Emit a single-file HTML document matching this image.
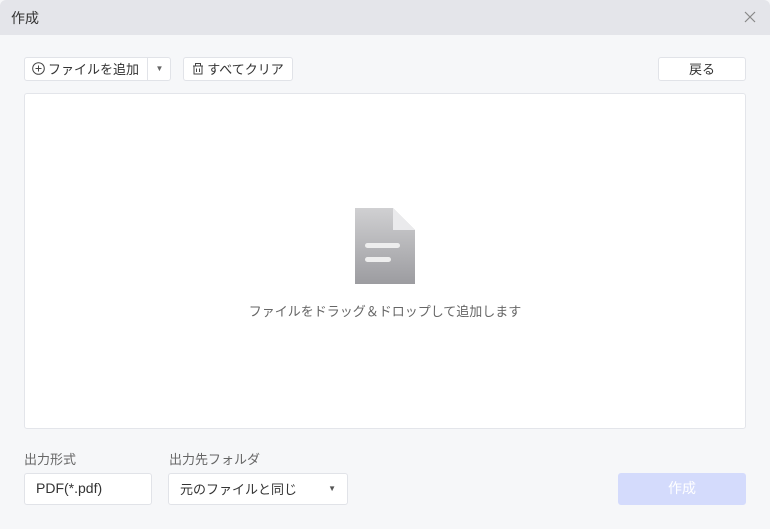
<!DOCTYPE html>
<html><head><meta charset="utf-8"><style>
*{box-sizing:border-box;margin:0;padding:0}
body{width:770px;height:529px;background:#f6f7f9;font-family:"Liberation Sans","Noto Sans CJK JP",sans-serif;position:relative;overflow:hidden;color:#333}
.hdr{position:absolute;left:0;top:0;width:770px;height:35px;background:#e4e5ea;border-radius:6px 6px 0 0}
.hdr .t{position:absolute;left:11px;top:8px;font-size:14px;color:#333}
.btn{position:absolute;background:#fff;border:1px solid #e1e3e8;border-radius:3px;font-size:13px;color:#333;display:flex;align-items:center;justify-content:center;padding-bottom:2px}
.drop{position:absolute;left:24px;top:93px;width:722px;height:336px;background:#fff;border:1px solid #e3e5ea;border-radius:3px}
.lbl{position:absolute;font-size:13px;color:#666;top:449px}
</style></head><body>
<div class="hdr"><span class="t">作成</span>
<svg style="position:absolute;left:744px;top:11px" width="12" height="12"><path d="M1 1L11 11M11 1L1 11" stroke="#888" stroke-width="1.2"/></svg></div>
<div class="btn" style="left:24px;top:57px;width:147px;height:24px;justify-content:flex-start">
<svg style="margin-left:7px" width="13" height="13"><circle cx="6.5" cy="6.5" r="5.8" fill="none" stroke="#444" stroke-width="1"/><path d="M6.5 3.5V9.5M3.5 6.5H9.5" stroke="#444"/></svg>
<span style="margin-left:3px">ファイルを追加</span>
<span style="position:absolute;left:122px;top:0;height:22px;border-left:1px solid #e1e3e8;width:24px;text-align:center;font-size:8px;line-height:22px;color:#666">▼</span></div>
<div class="btn" style="left:183px;top:57px;width:110px;height:24px">
<svg width="12" height="14" style="margin-right:3px"><path d="M1 5H11M3.5 5V2.5H8.5V5M2 5V13H10V5M4.5 7.5V11M7.5 7.5V11" fill="none" stroke="#444"/></svg>すべてクリア</div>
<div class="btn" style="left:658px;top:57px;width:88px;height:24px">戻る</div>
<div class="drop">
<svg style="position:absolute;left:330px;top:114px" width="61" height="76"><defs><linearGradient id="g" x1="0" y1="0" x2="0" y2="1"><stop offset="0" stop-color="#d0d0d2"/><stop offset="1" stop-color="#9c9ca0"/></linearGradient></defs>
<path d="M0 0H38L60 22V76H0Z" fill="url(#g)"/><path d="M38 0L60 22H38Z" fill="#eaeaec"/>
<rect x="10" y="35" width="35" height="5" rx="2.5" fill="#eee"/><rect x="10" y="49" width="26" height="5" rx="2.5" fill="#eee"/></svg>
<div style="position:absolute;left:0;width:100%;top:207px;text-align:center;font-size:13px;color:#666">ファイルをドラッグ＆ドロップして追加します</div>
</div>
<div class="lbl" style="left:24px">出力形式</div>
<div class="lbl" style="left:169px">出力先フォルダ</div>
<div class="btn" style="left:24px;top:473px;width:128px;height:32px;justify-content:flex-start;padding-left:11px;font-size:14px">PDF(*.pdf)</div>
<div class="btn" style="left:168px;top:473px;width:180px;height:32px;justify-content:flex-start;padding-left:11px">元のファイルと同じ<span style="position:absolute;right:11px;font-size:8px;color:#555">▼</span></div>
<div class="btn" style="left:618px;top:473px;width:128px;height:32px;background:#d4dbfc;border-color:#d4dbfc;color:#fff;font-size:14px">作成</div>
</body></html>
